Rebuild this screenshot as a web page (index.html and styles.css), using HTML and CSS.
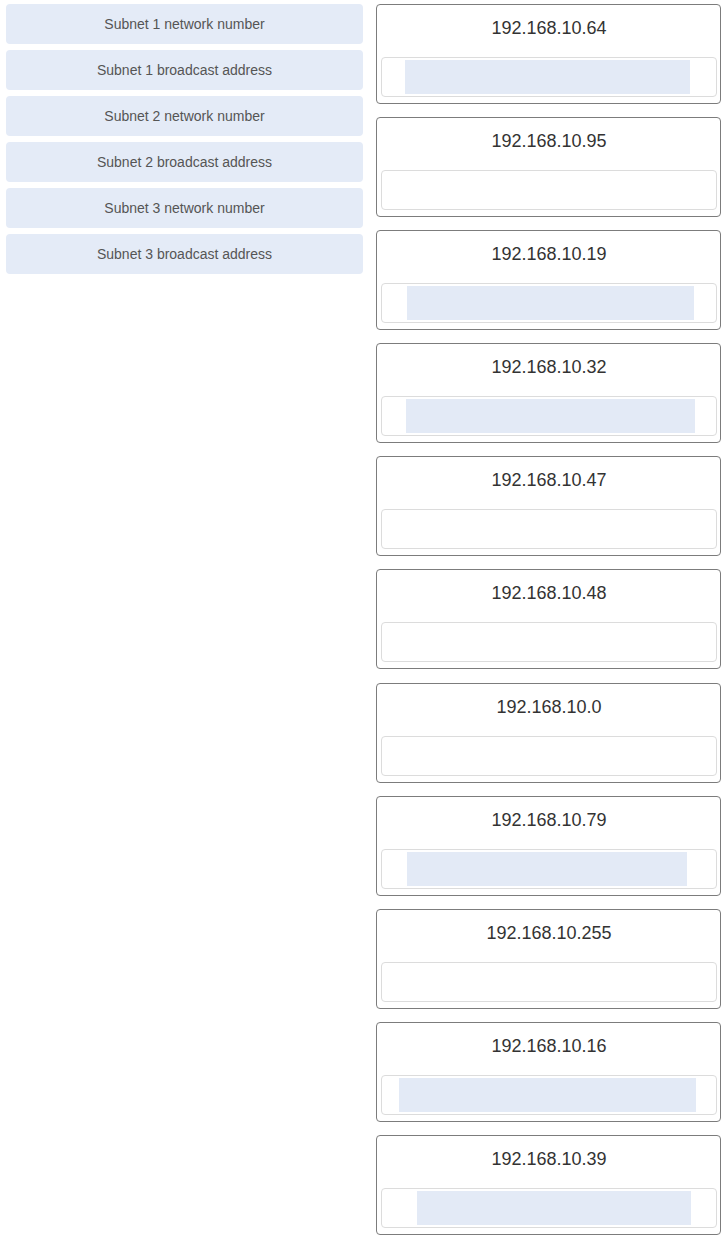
FILE: index.html
```html
<!DOCTYPE html>
<html lang="en">
<head>
  <meta charset="UTF-8">
  <title>Subnet drag and drop</title>
  <link rel="stylesheet" href="styles.css">
</head>
<body>
  <div class="board">
    <ul class="choices">
      <li class="choice">Subnet 1 network number</li>
      <li class="choice">Subnet 1 broadcast address</li>
      <li class="choice">Subnet 2 network number</li>
      <li class="choice">Subnet 2 broadcast address</li>
      <li class="choice">Subnet 3 network number</li>
      <li class="choice">Subnet 3 broadcast address</li>
    </ul>
    <div class="targets">
      <div class="target">
        <div class="addr">192.168.10.64</div>
        <div class="drop"><div class="fill" style="margin-left:23px;width:285px"></div></div>
      </div>
      <div class="target">
        <div class="addr">192.168.10.95</div>
        <div class="drop"></div>
      </div>
      <div class="target">
        <div class="addr">192.168.10.19</div>
        <div class="drop"><div class="fill" style="margin-left:25px;width:287px"></div></div>
      </div>
      <div class="target">
        <div class="addr">192.168.10.32</div>
        <div class="drop"><div class="fill" style="margin-left:24px;width:289px"></div></div>
      </div>
      <div class="target">
        <div class="addr">192.168.10.47</div>
        <div class="drop"></div>
      </div>
      <div class="target">
        <div class="addr">192.168.10.48</div>
        <div class="drop"></div>
      </div>
      <div class="target">
        <div class="addr">192.168.10.0</div>
        <div class="drop"></div>
      </div>
      <div class="target">
        <div class="addr">192.168.10.79</div>
        <div class="drop"><div class="fill" style="margin-left:25px;width:280px"></div></div>
      </div>
      <div class="target">
        <div class="addr">192.168.10.255</div>
        <div class="drop"></div>
      </div>
      <div class="target">
        <div class="addr">192.168.10.16</div>
        <div class="drop"><div class="fill" style="margin-left:17px;width:297px"></div></div>
      </div>
      <div class="target">
        <div class="addr">192.168.10.39</div>
        <div class="drop"><div class="fill" style="margin-left:35px;width:274px"></div></div>
      </div>
    </div>
  </div>
</body>
</html>
```
FILE: styles.css
```css
* { box-sizing: border-box; }
body { margin: 0; background: #fff; font-family: "Liberation Sans", Arial, sans-serif; }
.board { display: flex; gap: 13px; padding: 4px 6px; align-items: flex-start; }
.choices { list-style: none; margin: 0; padding: 0; width: 357px; display: flex; flex-direction: column; gap: 6px; }
.choice { height: 40px; line-height: 40px; background: #e4ebf7; border-radius: 4px; text-align: center; font-size: 14px; color: #555; }
.targets { width: 345px; display: flex; flex-direction: column; gap: 13.1px; }
.target { height: 100px; border: 1px solid #7c7c7c; border-radius: 4px; padding: 13px 3px 6px 4px; }
.addr { height: 20px; line-height: 20px; text-align: center; font-size: 18px; color: #333; margin-bottom: 19px; }
.drop { height: 40px; border: 1px solid #dcdcdc; border-radius: 4px; padding: 2px 0; display: flex; }
.fill { height: 100%; background: #e3eaf6; }
```
